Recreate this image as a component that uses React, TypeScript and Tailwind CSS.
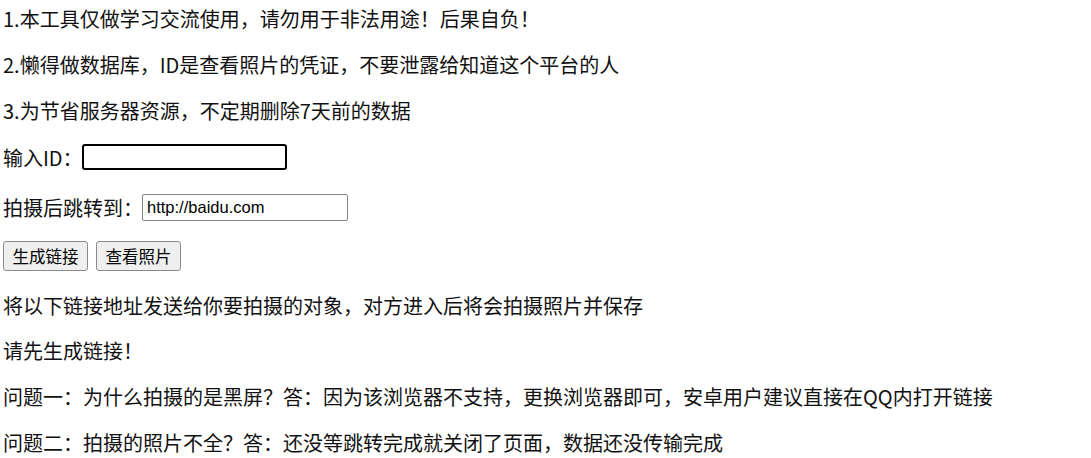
import React from 'react';

const CJK = "font-['Noto_Sans_CJK_SC','Noto_Sans',sans-serif]";

const NOTES = [
  '1.本工具仅做学习交流使用，请勿用于非法用途！后果自负！',
  '2.懒得做数据库，ID是查看照片的凭证，不要泄露给知道这个平台的人',
  '3.为节省服务器资源，不定期删除7天前的数据',
];

const FAQ = [
  '问题一：为什么拍摄的是黑屏？答：因为该浏览器不支持，更换浏览器即可，安卓用户建议直接在QQ内打开链接',
  '问题二：拍摄的照片不全？答：还没等跳转完成就关闭了页面，数据还没传输完成',
];

const App: React.FC = () => {
  return (
    <div className={`min-h-[458px] bg-white pl-[3px] pt-[5px] text-[20px] leading-[27px] text-[#111] ${CJK}`}>
      {NOTES.map((line, idx) => (
        <p key={idx} className={idx === 0 ? '' : 'mt-[19px]'}>
          {line}
        </p>
      ))}

      <div className="mt-[19px] flex h-[28px] items-center">
        <span>输入ID：</span>
        <input
          type="text"
          className="-ml-px h-[26px] w-[205px] rounded-[3px] border-2 border-black bg-white px-1 text-[16.5px] outline-none"
        />
      </div>

      <div className="mt-[21px] flex h-[30px] items-center">
        <span>拍摄后跳转到：</span>
        <input
          type="text"
          defaultValue="http://baidu.com"
          className="-ml-px h-[27px] w-[206px] rounded-[2px] border border-[#858585] bg-white px-[4px] font-['Liberation_Sans',Arial,sans-serif] text-[16.5px] text-black outline-none"
        />
      </div>

      <div className="mt-[19px] flex h-[30px] items-center gap-[8px]">
        <button className="h-[30px] w-[85px] rounded-[3px] border border-[#8a8a8a] bg-[#efefef] text-[16.5px] leading-none text-black">
          生成链接
        </button>
        <button className="h-[30px] w-[85px] rounded-[3px] border border-[#8a8a8a] bg-[#efefef] text-[16.5px] leading-none text-black">
          查看照片
        </button>
      </div>

      <p className="mt-[21px]">将以下链接地址发送给你要拍摄的对象，对方进入后将会拍摄照片并保存</p>
      <p className="mt-[18px]">请先生成链接！</p>
      {FAQ.map((line, idx) => (
        <p key={idx} className="mt-[19px]">
          {line}
        </p>
      ))}
    </div>
  );
};

export default App;
